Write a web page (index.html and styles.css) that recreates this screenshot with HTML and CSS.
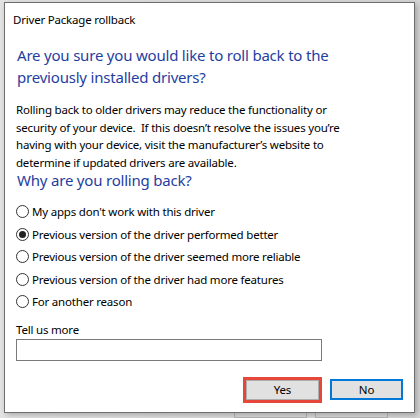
FILE: index.html
```html
<!DOCTYPE html>
<html lang="en">
<head>
   <meta charset="UTF-8">
   <title>Driver Package rollback</title>
   <link rel="stylesheet" href="styles.css">
</head>
<body>
   <div class="dialog">
      <div class="title">Driver Package rollback</div>
      <div class="content">
         <h1>Are you sure you would like to roll back to the previously installed drivers?</h1>
         <p class="info">Rolling back to older drivers may reduce the functionality or security of your device.&nbsp; If this doesn’t resolve the issues you’re having with your device, visit the manufacturer’s website to determine if updated drivers are available.</p>
         <h2>Why are you rolling back?</h2>
         <div class="options">
            <label class="option"><input type="radio" name="reason"> My apps don't work with this driver</label>
            <label class="option"><input type="radio" name="reason" checked> Previous version of the driver performed better</label>
            <label class="option"><input type="radio" name="reason"> Previous version of the driver seemed more reliable</label>
            <label class="option"><input type="radio" name="reason"> Previous version of the driver had more features</label>
            <label class="option"><input type="radio" name="reason"> For another reason</label>
         </div>
         <label class="more-label" for="more">Tell us more</label>
         <input type="text" id="more" class="more">
         <div class="buttons">
            <button class="btn btn-yes">Yes</button>
            <button class="btn btn-no">No</button>
         </div>
      </div>
   </div>
   <div class="behind">
      <span class="ghost-btn"></span>
      <span class="ghost-btn"></span>
   </div>
</body>
</html>
```

FILE: styles.css
```css
* { box-sizing: border-box; }
body {
   margin: 0;
   width: 420px;
   height: 418px;
   overflow: hidden;
   background: linear-gradient(90deg, #e4e4e4, #d6d6d6);
   font-family: "Noto Sans", "Open Sans", sans-serif;
   font-size: 11.5px;
   letter-spacing: -0.2px;
   color: #000;
}
.dialog {
   margin: 2px 0 0 4px;
   width: 411px;
   height: 411px;
   background: #fff;
   border: 1px solid #6e6e6e;
   box-shadow: 2px 2px 6px rgba(0,0,0,0.25);
   position: relative;
   z-index: 1;
}
.title {
   padding: 8px 0 0 8px;
   height: 30px;
   line-height: 17px;
}
.content {
   padding: 11px 0 0 11px;
}
h1 {
   margin: 0;
   width: 345px;
   font-size: 15px;
   font-weight: normal;
   line-height: 22px;
   color: #1f3ea1;
   padding-left: 1px;
}
.info {
   margin: 13px 0 0;
   width: 340px;
   line-height: 17.7px;
}
h2 {
   margin: -3px 0 0;
   font-size: 15px;
   font-weight: normal;
   line-height: 22px;
   color: #1f3ea1;
   padding-left: 1px;
}
.options {
   margin-top: 12px;
   display: flex;
   flex-direction: column;
   gap: 4.5px;
}
.option {
   display: flex;
   align-items: center;
   gap: 3px;
   height: 18px;
}
.option input {
   appearance: none;
   margin: 0;
   width: 13px;
   height: 13px;
   border: 1px solid #333;
   border-radius: 50%;
   display: grid;
   place-items: center;
}
.option input:checked::after {
   content: "";
   width: 7px;
   height: 7px;
   border-radius: 50%;
   background: #222;
}
.more-label {
   display: block;
   margin-top: 10px;
   line-height: 17px;
}
.more {
   display: block;
   margin-top: 1px;
   width: 306px;
   height: 22px;
   border: 1px solid #7a7a7a;
   background: #fff;
}
.buttons {
   margin-top: 16px;
   display: flex;
   align-items: center;
   gap: 8px;
   padding-left: 227px;
}
.btn {
   font-family: inherit;
   font-size: 11.5px;
   letter-spacing: -0.2px;
   color: #000;
   background: #e1e1e1;
   padding: 0;
}
.btn-yes {
   width: 79px;
   height: 26px;
   border: 4px solid #e5483a;
   position: relative;
}
.btn-yes::after {
   content: "";
   position: absolute;
   inset: -1px;
   border: 1px solid #adadad;
}
.btn-no {
   width: 73px;
   height: 21px;
   border: 2px solid #0078d7;
}
.behind {
   display: flex;
   gap: 8px;
   padding-left: 234px;
}
.ghost-btn {
   width: 73px;
   height: 5px;
   border: 1px solid #b5b5b5;
   border-top: none;
   background: #dadada;
}
```
